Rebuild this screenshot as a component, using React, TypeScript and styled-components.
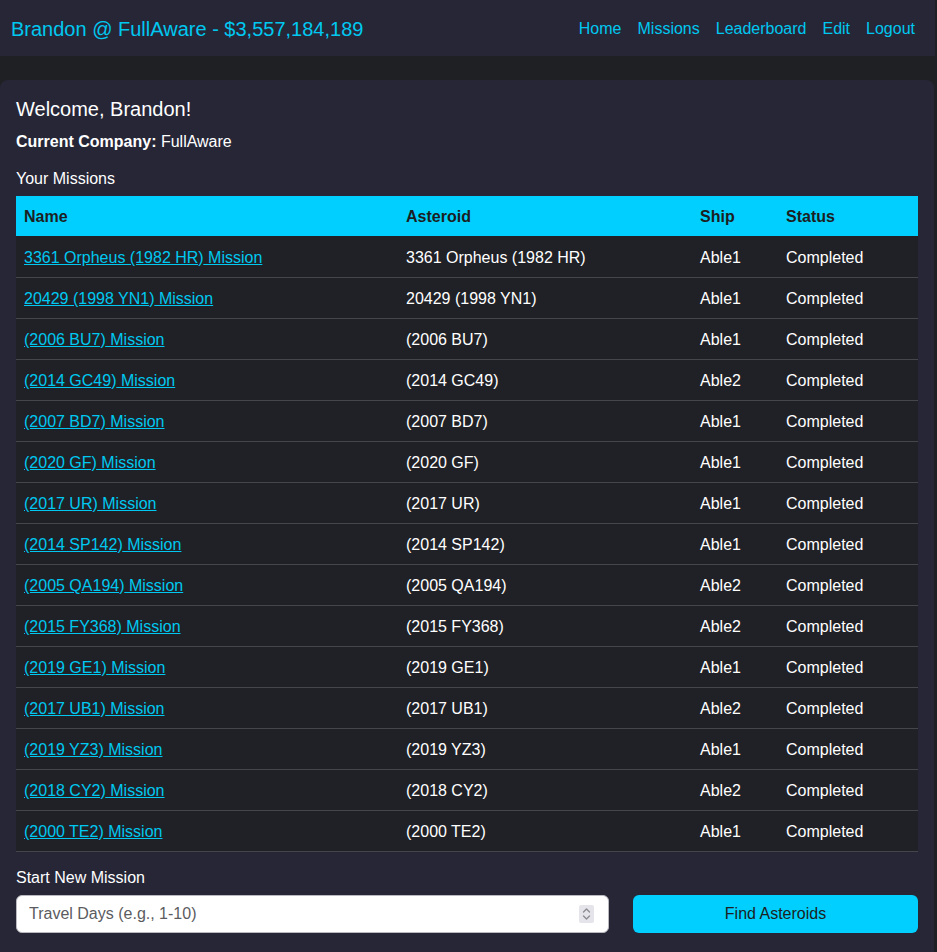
import React from "react";
import styled, { createGlobalStyle } from "styled-components";

const Global = createGlobalStyle`
  html, body { margin: 0; padding: 0; background: #1f2024; }
  body { font-family: "Liberation Sans", Arial, sans-serif; color: #ffffff; width: 937px; overflow: hidden; }
  * { box-sizing: border-box; }
`;

const Page = styled.div`
  width: 935px;
  min-height: 952px;
`;

const Header = styled.header`
  height: 56px;
  background: #262637;
  display: flex;
  align-items: center;
  justify-content: space-between;
  padding: 2px 20px 0 11px;
`;

const Brand = styled.div`
  color: #00c8f0;
  font-size: 20px;
`;

const Nav = styled.nav`
  display: flex;
  gap: 16px;
`;

const NavLink = styled.a`
  color: #00c8f0;
  font-size: 16px;
  text-decoration: none;
`;

const Panel = styled.main`
  margin-top: 24px;
  width: 934px;
  background: #262637;
  border-radius: 8px;
  padding: 17px 16px 40px;
`;

const Welcome = styled.h2`
  margin: 0;
  font-size: 20px;
  font-weight: normal;
  line-height: 24px;
`;

const Company = styled.p`
  margin: 11px 0 0;
  font-size: 16px;
  line-height: 19px;
`;

const SectionTitle = styled.h3`
  margin: 18px 0 0;
  font-size: 16px;
  font-weight: normal;
  line-height: 19px;
`;

const Table = styled.table`
  margin-top: 8px;
  width: 902px;
  border-collapse: collapse;
  table-layout: fixed;
  font-size: 16px;
`;

const Th = styled.th<{ $w: number }>`
  width: ${(p) => p.$w}px;
  background: #00cfff;
  color: #1c1e22;
  text-align: left;
  font-weight: bold;
  padding: 2px 8px 0;
  height: 40px;
`;

const Tr = styled.tr`
  background: #1f2126;
  border-bottom: 1px solid #45464b;
`;

const Td = styled.td`
  padding: 3px 8px 0;
  height: 41px;
  color: #ffffff;
  white-space: nowrap;
`;

const MissionLink = styled.a`
  color: #00c8f0;
  text-decoration: underline;
`;

const StartLabel = styled.div`
  margin-top: 16px;
  font-size: 16px;
  line-height: 19px;
`;

const FormRow = styled.div`
  margin-top: 8px;
  display: flex;
  gap: 24px;
`;

const InputBox = styled.div`
  width: 593px;
  height: 38px;
  background: #ffffff;
  border: 1px solid #b9b9bf;
  border-radius: 6px;
  display: flex;
  align-items: center;
  padding: 0 14px 0 12px;
`;

const Input = styled.input`
  flex: 1;
  border: none;
  outline: none;
  font-family: "Liberation Sans", Arial, sans-serif;
  font-size: 16px;
  color: #222;
  background: transparent;
  padding: 0;
  &::placeholder { color: #5b5b60; }
`;

const Spinner = styled.div`
  width: 15px;
  height: 18px;
  background: #e4e4ea;
  border-radius: 2px;
  display: flex;
  align-items: center;
  justify-content: center;
`;

const Button = styled.button`
  width: 285px;
  height: 38px;
  background: #00cfff;
  border: none;
  border-radius: 6px;
  font-family: "Liberation Sans", Arial, sans-serif;
  font-size: 16px;
  color: #1c1e22;
`;

const missions: [string, string, string][] = [
  ["3361 Orpheus (1982 HR)", "Able1", "Completed"],
  ["20429 (1998 YN1)", "Able1", "Completed"],
  ["(2006 BU7)", "Able1", "Completed"],
  ["(2014 GC49)", "Able2", "Completed"],
  ["(2007 BD7)", "Able1", "Completed"],
  ["(2020 GF)", "Able1", "Completed"],
  ["(2017 UR)", "Able1", "Completed"],
  ["(2014 SP142)", "Able1", "Completed"],
  ["(2005 QA194)", "Able2", "Completed"],
  ["(2015 FY368)", "Able2", "Completed"],
  ["(2019 GE1)", "Able1", "Completed"],
  ["(2017 UB1)", "Able2", "Completed"],
  ["(2019 YZ3)", "Able1", "Completed"],
  ["(2018 CY2)", "Able2", "Completed"],
  ["(2000 TE2)", "Able1", "Completed"],
];

export default function App() {
  return (
    <Page>
      <Global />
      <Header>
        <Brand>Brandon @ FullAware - $3,557,184,189</Brand>
        <Nav>
          <NavLink href="#">Home</NavLink>
          <NavLink href="#">Missions</NavLink>
          <NavLink href="#">Leaderboard</NavLink>
          <NavLink href="#">Edit</NavLink>
          <NavLink href="#">Logout</NavLink>
        </Nav>
      </Header>
      <Panel>
        <Welcome>Welcome, Brandon!</Welcome>
        <Company>
          <strong>Current Company:</strong> FullAware
        </Company>
        <SectionTitle>Your Missions</SectionTitle>
        <Table>
          <thead>
            <tr>
              <Th $w={382}>Name</Th>
              <Th $w={294}>Asteroid</Th>
              <Th $w={86}>Ship</Th>
              <Th $w={140}>Status</Th>
            </tr>
          </thead>
          <tbody>
            {missions.map(([a, ship, status]) => (
              <Tr key={a}>
                <Td>
                  <MissionLink href="#">{a} Mission</MissionLink>
                </Td>
                <Td>{a}</Td>
                <Td>{ship}</Td>
                <Td>{status}</Td>
              </Tr>
            ))}
          </tbody>
        </Table>
        <StartLabel>Start New Mission</StartLabel>
        <FormRow>
          <InputBox>
            <Input type="text" placeholder="Travel Days (e.g., 1-10)" />
            <Spinner>
              <svg width="9" height="14" viewBox="0 0 9 14" fill="none" stroke="#8a8a90" strokeWidth="1.3" strokeLinecap="round" strokeLinejoin="round">
                <path d="M1.5 5 L4.5 2 L7.5 5" />
                <path d="M1.5 9 L4.5 12 L7.5 9" />
              </svg>
            </Spinner>
          </InputBox>
          <Button>Find Asteroids</Button>
        </FormRow>
      </Panel>
    </Page>
  );
}
